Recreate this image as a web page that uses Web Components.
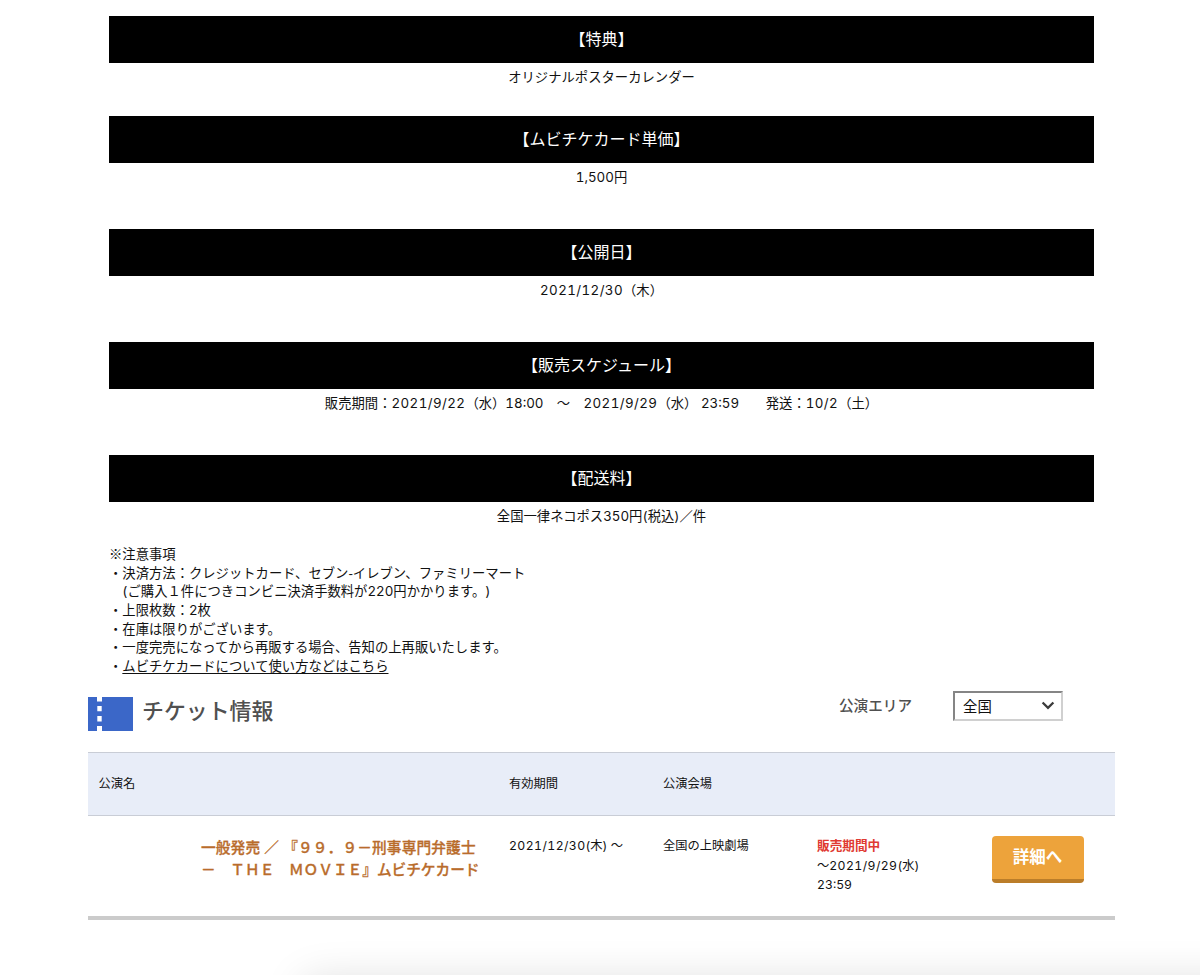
<!DOCTYPE html>
<html lang="ja">
<head>
<meta charset="utf-8">
<title>チケット情報</title>
<style>
html, body { margin: 0; height: 975px; overflow: hidden; background: #fff; }
body { font-family: Inter, "Noto Sans CJK JP", sans-serif; color: #111; font-feature-settings: "tnum" 1; text-spacing-trim: space-all; }
</style>
</head>
<body>
<ticket-page></ticket-page>
<script>
const define = (name, html) => customElements.define(name, class extends HTMLElement {
  constructor() {
    super();
    this.attachShadow({ mode: 'open' }).innerHTML = html.trim();
  }
});

define('info-section', `
<style>
:host { display: block; height: 100px; font-size: 13.33px; }
:host([tall]) { height: 113px; }
:host([last]) { height: 90px; }
h2 { margin: 0; height: 47px; background: #000; color: #fff; font-size: 16px; line-height: 47px; font-weight: 400; text-align: center; white-space: nowrap; }
.body { height: 28px; line-height: 28px; text-align: center; white-space: pre; }
</style>
<h2><slot name="title"></slot></h2>
<div class="body"><slot></slot></div>`);

define('date-text', `<style>:host { letter-spacing: .42px; }</style><slot></slot>`);

define('note-line', `<style>
:host { display: block; height: 18.67px; line-height: 18.67px; font-size: 13.33px; white-space: nowrap; }
</style><slot></slot>`);

define('ticket-icon', `
<style>:host { display: block; width: 45px; height: 34px; } svg { display: block; }</style>
<svg width="45" height="34" viewBox="0 0 45 34">
<path fill="#3b67c8" d="M0 0H45V34H0Z"/>
<path fill="#fff" d="M9 0h5v4.5H9zM9.3 9h4.4v5.2H9.3zM9.3 19h4.4v5.5H9.3zM9 29h5v5H9z"/>
</svg>`);

define('area-select', `
<style>
:host { display: flex; box-sizing: border-box; width: 110px; height: 30px; border: 2px solid; border-color: #858585 #d0d0d0 #d0d0d0 #858585; align-items: center; justify-content: space-between; padding: 0 6px 2px 8px; font-size: 14.4px; color: #111; }
svg { display: block; }
</style>
<slot></slot>
<svg width="14" height="9" viewBox="0 0 14 9"><path d="M1.6 1.5L7 6.8L12.4 1.5" fill="none" stroke="#3b3b3b" stroke-width="2.3"/></svg>`);

define('ticket-header', `
<style>
:host { display: flex; height: 61px; }
ticket-icon { margin-top: 6px; }
h1 { margin: 0 0 0 9px; font-size: 21.9px; line-height: 40px; font-weight: 500; color: #505050; width: 697px; }
.label { font-size: 14.6px; line-height: 30px; font-weight: 500; color: #505050; width: 114px; }
</style>
<ticket-icon></ticket-icon><h1>チケット情報</h1><span class="label">公演エリア</span><area-select>全国</area-select>`);

define('detail-button', `<style>
:host { display: block; box-sizing: border-box; width: 92px; height: 47px; background: #eda33b; border-bottom: 4px solid #bb7d29; border-radius: 4px; color: #fff; font-weight: 700; font-size: 16.5px; line-height: 43px; text-align: center; }
</style><slot></slot>`);

define('ticket-table', `
<style>
:host { display: block; width: 1027px; font-size: 12.25px; border-bottom: 4px solid #cbcbcb; }
.row { display: grid; grid-template-columns: 421px 154px 154px 174.5px 1fr; }
.head { box-sizing: border-box; height: 64px; line-height: 61px; background: #e8edf8; border: 1px solid #c9cdd6; border-width: 1px 0; }
.head span:first-child { padding-left: 10.5px; }
.data { height: 100px; padding-top: 20px; box-sizing: border-box; line-height: 19.7px; white-space: nowrap; }
.title { padding: 1px 0 0 113px; font-size: 14.67px; line-height: 22.3px; color: #b96c2c; font-weight: 500; -webkit-text-stroke: .3px #b96c2c; }
.title div:first-child { letter-spacing: .15px; }
.status { color: #e03a32; font-weight: 700; font-size: 12.65px; }
</style>
<div class="row head"><span>公演名</span><span>有効期間</span><span>公演会場</span></div>
<div class="row data">
<div class="title"><div>一般発売 ／ 『９９．９－刑事専門弁護士</div><div>－　ＴＨＥ　ＭＯＶＩＥ』ムビチケカード</div></div><div><date-text>2021/12/30</date-text>(木) ～</div><div>全国の上映劇場</div><div><div class="status">販売期間中</div><div>～<date-text>2021/9/29</date-text>(水)</div><div>23:59</div></div><detail-button>詳細へ</detail-button>
</div>`);

define('bottom-shade', `
<style>
:host { position: fixed; left: 302px; right: -80px; bottom: -60px; height: 56px; border-radius: 12px; box-shadow: 0 0 42px rgba(0,0,0,.13); }
</style>`);

define('ticket-page', `
<style>
:host { display: block; width: 1200px; height: 975px; overflow: hidden; }
main { padding: 16px 0 0 109px; width: 985px; }
.notes { height: 146px; }
.mark { font-family: "Noto Sans CJK JP", sans-serif; }
.hyphen { font-family: "Liberation Sans", sans-serif; }
u { text-decoration-thickness: 1px; text-underline-offset: 2px; }
.tickets { margin-left: 88px; }
</style>
<main>
<info-section><span slot="title">【特典】</span>オリジナルポスターカレンダー</info-section>
<info-section tall><span slot="title">【ムビチケカード単価】</span>1,500円</info-section>
<info-section tall><span slot="title">【公開日】</span><date-text>2021/12/30</date-text>（木）</info-section>
<info-section tall><span slot="title">【販売スケジュール】</span>販売期間：<date-text>2021/9/22</date-text>（水）18:00　～　<date-text>2021/9/29</date-text>（水） 23:59　　発送：<date-text>10/2</date-text>（土）</info-section>
<info-section last><span slot="title">【配送料】</span>全国一律ネコポス350円(税込)／件</info-section>
<div class="notes">
<note-line><span class="mark">※</span>注意事項</note-line>
<note-line>・決済方法：クレジットカード、セブン<span class="hyphen">-</span>イレブン、ファミリーマート</note-line>
<note-line>　(ご購入１件につきコンビニ決済手数料が220円かかります。)</note-line>
<note-line>・上限枚数：2枚</note-line>
<note-line>・在庫は限りがございます。</note-line>
<note-line>・一度完売になってから再販する場合、告知の上再販いたします。</note-line>
<note-line>・<u>ムビチケカードについて使い方などはこちら</u></note-line>
</div>
</main>
<div class="tickets"><ticket-header></ticket-header><ticket-table></ticket-table></div>
<bottom-shade></bottom-shade>`);
</script>
</body>
</html>
